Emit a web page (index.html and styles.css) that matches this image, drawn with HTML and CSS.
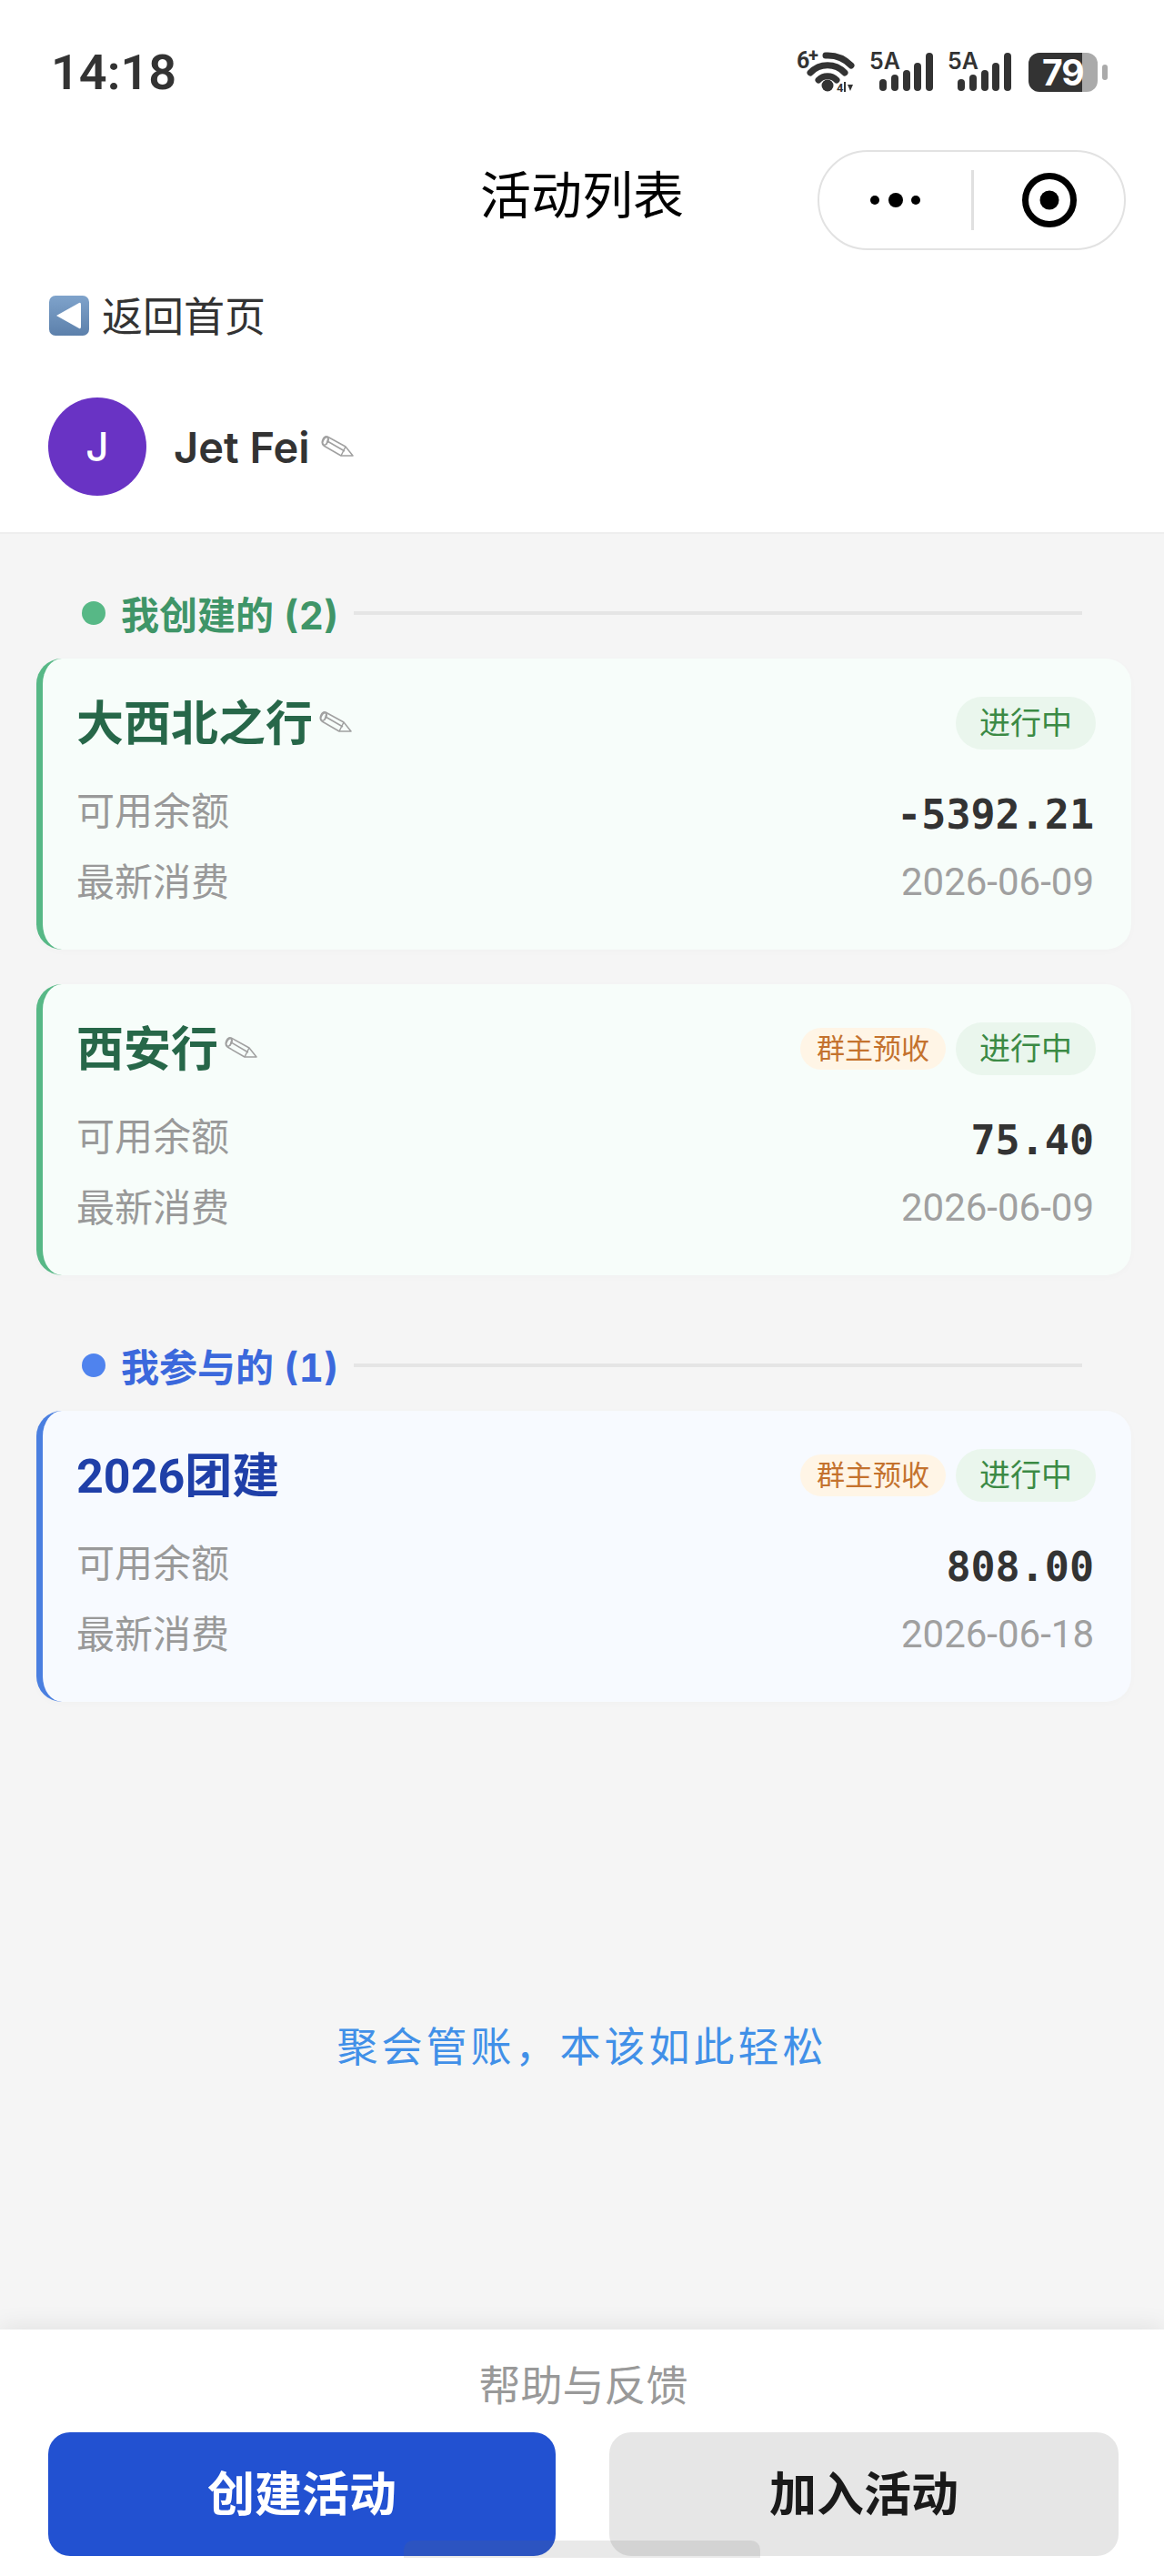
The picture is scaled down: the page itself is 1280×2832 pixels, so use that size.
FILE: index.html
```html
<!DOCTYPE html>
<html lang="zh-CN">
<head>
    <meta charset="UTF-8">
    <title>活动列表</title>
    <link rel="stylesheet" href="styles.css">
</head>
<body>
    <svg class="svg-defs" width="0" height="0">
        <symbol id="pencil" viewBox="0 0 36 24">
            <g fill="none" stroke="#a0a0a0" stroke-width="1.5" stroke-linejoin="round">
                <path d="M7 1 L27 12 L35 22 L22 22 L3 11 Q0 9 2 4 Q4 0 7 1 Z"/>
                <ellipse cx="5" cy="6" rx="2.6" ry="4.4" transform="rotate(28 5 6)"/>
                <path d="M8 2.5 L6 9.5 M7 6 L26 17 M27 12 L22 22"/>
            </g>
        </symbol>
    </svg>

    <header class="page-header">
        <div class="status-bar">
            <span class="status-time">14:18</span>
            <div class="status-icons">
                <svg class="icon-wifi" width="64" height="44" viewBox="0 0 64 44">
                    <text x="0" y="18" class="sb-six">6</text>
                    <text x="13" y="11" class="sb-plus">+</text>
                    <g fill="none" stroke="#333" stroke-width="7" stroke-linecap="round">
                        <path d="M32 4 A36 36 0 0 1 60 15"/>
                        <path d="M15 23 A26 26 0 0 1 53 23"/>
                        <path d="M24 31 A14 14 0 0 1 44 31"/>
                    </g>
                    <circle cx="34" cy="37" r="6.5" fill="#333"/>
                    <text x="44" y="44" class="sb-tiny">4</text>
                    <path d="M52 33h2v11h-2zM56 36h6l-3 7z" fill="#333"/>
                </svg>
                <svg class="icon-signal" width="70" height="44" viewBox="0 0 70 44">
                    <text x="0" y="19" class="sb-net">5A</text>
                    <rect x="11" y="30" width="8" height="13" rx="4" fill="#333"/>
                    <rect x="24" y="25" width="8" height="18" rx="4" fill="#333"/>
                    <rect x="37" y="20" width="8" height="23" rx="4" fill="#333"/>
                    <rect x="49" y="12" width="8" height="31" rx="4" fill="#333"/>
                    <rect x="62" y="1" width="8" height="42" rx="4" fill="#333"/>
                </svg>
                <svg class="icon-signal" width="70" height="44" viewBox="0 0 70 44">
                    <text x="0" y="19" class="sb-net">5A</text>
                    <rect x="11" y="30" width="8" height="13" rx="4" fill="#333"/>
                    <rect x="24" y="25" width="8" height="18" rx="4" fill="#333"/>
                    <rect x="37" y="20" width="8" height="23" rx="4" fill="#333"/>
                    <rect x="49" y="12" width="8" height="31" rx="4" fill="#333"/>
                    <rect x="62" y="1" width="8" height="42" rx="4" fill="#333"/>
                </svg>
                <div class="battery">
                    <div class="battery-body"><span class="battery-num">79</span></div>
                    <div class="battery-nub"></div>
                </div>
            </div>
        </div>

        <nav class="nav-row">
            <span></span>
            <h1 class="nav-title">活动列表</h1>
            <div class="capsule">
                <svg width="60" height="20" viewBox="0 0 60 20">
                    <circle cx="7" cy="10" r="5" fill="#000"/>
                    <circle cx="30" cy="10" r="8" fill="#000"/>
                    <circle cx="52" cy="10" r="5" fill="#000"/>
                </svg>
                <span class="capsule-line"></span>
                <svg width="62" height="62" viewBox="0 0 62 62">
                    <circle cx="31" cy="31" r="26.5" fill="none" stroke="#000" stroke-width="7"/>
                    <circle cx="31" cy="31" r="10.5" fill="#000"/>
                </svg>
            </div>
        </nav>

        <a class="back-link" href="#">
            <svg width="44" height="44" viewBox="0 0 44 44">
                <defs>
                    <linearGradient id="backFill" x1="0" y1="0" x2="0" y2="1">
                        <stop offset="0" stop-color="#7fa3cb"/>
                        <stop offset="1" stop-color="#5c80ab"/>
                    </linearGradient>
                </defs>
                <rect width="44" height="44" rx="7" fill="url(#backFill)"/>
                <path d="M8 22 L33 8 Q35 7 35 10 L35 34 Q35 37 33 36 Z" fill="#fff"/>
            </svg>
            <span>返回首页</span>
        </a>

        <div class="user-row">
            <div class="avatar">J</div>
            <span class="user-name">Jet Fei</span>
            <svg class="pencil pencil-user"><use href="#pencil"/></svg>
        </div>
    </header>

    <main class="content">
        <div class="section-head section-green">
            <span class="section-dot"></span>
            <span class="section-text">我创建的 (2)</span>
            <span class="section-line"></span>
        </div>

        <div class="card card-green">
            <div class="card-head">
                <div class="card-title">大西北之行<svg class="pencil"><use href="#pencil"/></svg></div>
                <div class="badges"><span class="badge badge-status">进行中</span></div>
            </div>
            <div class="card-row"><span class="row-label">可用余额</span><span class="amount">-5392.21</span></div>
            <div class="card-row"><span class="row-label">最新消费</span><span class="date">2026-06-09</span></div>
        </div>

        <div class="card card-green">
            <div class="card-head">
                <div class="card-title">西安行<svg class="pencil"><use href="#pencil"/></svg></div>
                <div class="badges">
                    <span class="badge badge-owner">群主预收</span>
                    <span class="badge badge-status">进行中</span>
                </div>
            </div>
            <div class="card-row"><span class="row-label">可用余额</span><span class="amount">75.40</span></div>
            <div class="card-row"><span class="row-label">最新消费</span><span class="date">2026-06-09</span></div>
        </div>

        <div class="section-head section-blue">
            <span class="section-dot"></span>
            <span class="section-text">我参与的 (1)</span>
            <span class="section-line"></span>
        </div>

        <div class="card card-blue">
            <div class="card-head">
                <div class="card-title">2026团建</div>
                <div class="badges">
                    <span class="badge badge-owner">群主预收</span>
                    <span class="badge badge-status">进行中</span>
                </div>
            </div>
            <div class="card-row"><span class="row-label">可用余额</span><span class="amount">808.00</span></div>
            <div class="card-row"><span class="row-label">最新消费</span><span class="date">2026-06-18</span></div>
        </div>

        <p class="tagline">聚会管账，本该如此轻松</p>
    </main>

    <footer class="page-footer">
        <p class="help-link">帮助与反馈</p>
        <div class="footer-buttons">
            <button class="btn btn-primary">创建活动</button>
            <button class="btn btn-plain">加入活动</button>
        </div>
        <div class="home-bar"></div>
    </footer>
</body>
</html>
```

FILE: styles.css
```css
* {
    margin: 0;
    padding: 0;
    box-sizing: border-box;
}

body {
    width: 1280px;
    min-height: 2832px;
    display: flex;
    flex-direction: column;
    background: #f5f5f5;
    color: #333;
    font-family: "Inter", "Noto Sans CJK SC", sans-serif;
}

.svg-defs {
    position: absolute;
}

.page-header {
    background: #fff;
    padding-bottom: 40px;
    border-bottom: 2px solid #eee;
    height: 587px;
}

/* status bar */
.status-bar {
    height: 158px;
    padding: 0 62px 0 56px;
    display: flex;
    align-items: center;
    justify-content: space-between;
}

.status-time {
    font-family: "Roboto", sans-serif;
    font-size: 54px;
    font-weight: 600;
    color: #333;
}

.status-icons {
    display: flex;
    align-items: center;
    gap: 16px;
}

.status-icons svg {
    display: block;
    overflow: visible;
}

.sb-six {
    font: 700 25px "Roboto", sans-serif;
    fill: #333;
}

.sb-plus {
    font: 700 20px "Roboto", sans-serif;
    fill: #333;
}

.sb-net {
    font: 600 25px "Inter", sans-serif;
    fill: #333;
}

.sb-tiny {
    font: 700 13px "Roboto", sans-serif;
    fill: #333;
}

.battery {
    display: flex;
    align-items: center;
    gap: 5px;
    margin-left: 3px;
}

.battery-body {
    width: 76px;
    height: 43px;
    border-radius: 12px;
    background: linear-gradient(90deg, #333 0, #333 59px, #aaa 59px);
    display: flex;
    align-items: center;
    padding-left: 15px;
}

.battery-num {
    font: 700 39px/43px "Inter", sans-serif;
    letter-spacing: -1px;
    color: #fff;
}

.battery-nub {
    width: 6px;
    height: 17px;
    border-radius: 3px;
    background: #aaa;
}

/* title row */
.nav-row {
    margin-top: 7px;
    padding: 0 42px;
    display: grid;
    grid-template-columns: 1fr auto 1fr;
    align-items: center;
    height: 110px;
}

.nav-title {
    font-size: 56px;
    font-weight: 400;
    color: #000;
    padding-bottom: 19px;
}

.capsule {
    justify-self: end;
    width: 339px;
    height: 110px;
    border: 2px solid #e2e2e2;
    border-radius: 55px;
    display: flex;
    align-items: center;
    padding-left: 54px;
}

.capsule-line {
    width: 3px;
    height: 66px;
    background: #e0e0e0;
    margin: 0 52px 0 53px;
}

/* back + user */
.back-link {
    margin: 42px 0 0 54px;
    height: 60px;
    display: flex;
    align-items: center;
    gap: 14px;
    font-size: 45px;
    color: #333;
    text-decoration: none;
}

.back-link span {
    padding-bottom: 3px;
}

.user-row {
    margin: 60px 0 0 53px;
    display: flex;
    align-items: center;
}

.avatar {
    width: 108px;
    height: 108px;
    border-radius: 50%;
    background: #6933c4;
    color: #fff;
    font-size: 44px;
    font-weight: 500;
    display: flex;
    align-items: center;
    justify-content: center;
}

.user-name {
    margin-left: 30px;
    font-size: 47px;
    font-weight: 600;
    color: #333;
}

.pencil {
    width: 36px;
    height: 24px;
    margin-left: 7px;
    margin-top: 4px;
    flex: none;
}

.pencil-user {
    margin-left: 12px;
    margin-top: 0;
}

/* list */
.content {
    flex: 1;
    padding: 62px 36px 0 40px;
}

.section-head {
    height: 50px;
    margin-bottom: 25px;
    padding: 0 54px 0 50px;
    display: flex;
    align-items: center;
    gap: 17px;
}

.card + .section-head {
    margin-top: 74px;
}

.section-dot {
    width: 26px;
    height: 26px;
    border-radius: 50%;
}

.section-text {
    font-size: 42px;
    font-weight: 700;
    font-variant-numeric: tabular-nums;
    padding-bottom: 2px;
}

.section-line {
    flex: 1;
    height: 4px;
    background: #e5e5e5;
}

.section-green .section-dot { background: #57b886; }
.section-green .section-text { color: #3f9568; }
.section-blue .section-dot { background: #4f83ee; }
.section-blue .section-text { color: #3b68dc; }

.card {
    height: 320px;
    padding: 42px 39px 44px 37px;
    border-left: 7px solid;
    border-radius: 28px;
    box-shadow: 0 2px 8px rgba(0, 0, 0, 0.02);
}

.card + .card {
    margin-top: 38px;
}

.card-green {
    background: #f7fdfa;
    border-color: #57b886;
}

.card-blue {
    background: #f7faff;
    border-color: #4a7fe0;
}

.card-head {
    height: 58px;
    margin-bottom: 38px;
    display: flex;
    align-items: center;
    justify-content: space-between;
}

.card-title {
    font-family: "Roboto", "Noto Sans CJK SC", sans-serif;
    font-size: 52px;
    font-weight: 700;
    padding-bottom: 7px;
    display: flex;
    align-items: center;
}

.card-green .card-title { color: #276749; }
.card-blue .card-title { color: #1f3fa8; }

.badges {
    display: flex;
    align-items: center;
    gap: 11px;
}

.badge {
    border-radius: 29px;
    white-space: nowrap;
    display: flex;
    align-items: center;
    padding-bottom: 5px;
}

.badge-status {
    height: 58px;
    padding-left: 26px;
    padding-right: 26px;
    font-size: 34px;
    background: #eaf6ed;
    color: #3b8a45;
}

.badge-owner {
    height: 46px;
    padding-left: 18px;
    padding-right: 18px;
    font-size: 31px;
    background: #fff5e6;
    color: #c4722e;
}

.card-row {
    height: 60px;
    padding-right: 2px;
    display: flex;
    align-items: center;
    justify-content: space-between;
    font-size: 42px;
    color: #999;
}

.card-row + .card-row {
    margin-top: 18px;
}

.row-label {
    padding-bottom: 7px;
}

.amount {
    font-family: "DejaVu Sans Mono", monospace;
    font-size: 45px;
    font-weight: 700;
    color: #333;
    padding-top: 6px;
}

.date {
    font-family: "Roboto", sans-serif;
    font-size: 42px;
    font-weight: 400;
    color: #a0a0a0;
    padding-bottom: 2px;
}

.tagline {
    margin-top: 350px;
    padding-right: 4px;
    height: 60px;
    line-height: 60px;
    text-align: center;
    font-size: 45px;
    letter-spacing: 4px;
    color: #4190e8;
}

/* bottom bar */
.page-footer {
    position: relative;
    height: 271px;
    padding: 31px 50px 22px 53px;
    background: #fff;
    box-shadow: 0 -4px 24px rgba(0, 0, 0, 0.08);
}

.help-link {
    height: 60px;
    line-height: 60px;
    margin-bottom: 22px;
    text-align: center;
    font-size: 46px;
    color: #999;
}

.footer-buttons {
    display: grid;
    grid-template-columns: 558px 560px;
    gap: 59px;
}

.btn {
    height: 136px;
    border: 0;
    border-radius: 24px;
    padding-bottom: 8px;
    font-family: inherit;
    font-size: 52px;
    font-weight: 700;
}

.btn-primary {
    background: #2251d1;
    color: #fff;
}

.btn-plain {
    background: #e6e6e6;
    color: #1a1a1a;
}

.home-bar {
    position: absolute;
    left: 444px;
    bottom: 20px;
    width: 392px;
    height: 19px;
    border-radius: 10px 10px 0 0;
    background: rgba(110, 110, 110, 0.15);
}
```
